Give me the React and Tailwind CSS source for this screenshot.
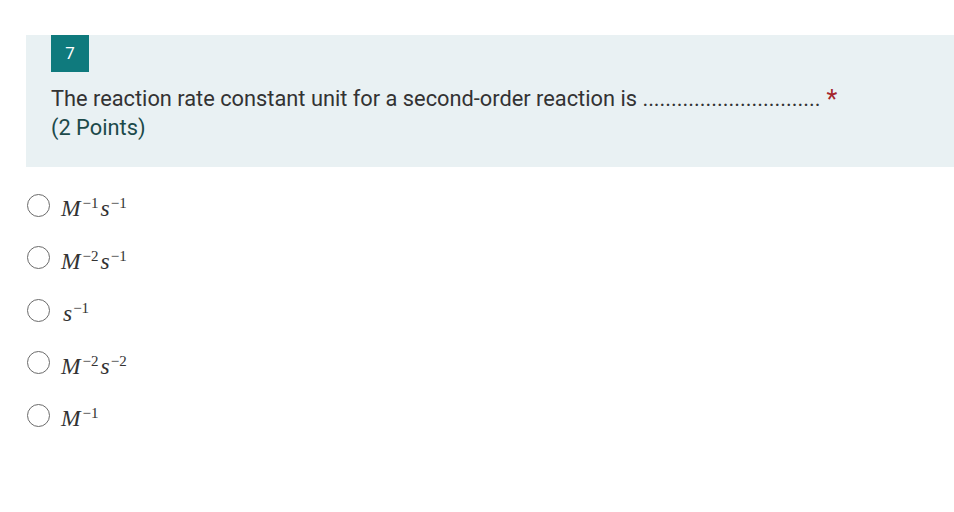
export default function App() {
    const options = [
        { base: "M", e1: "−1", s: "s", e2: "−1" },
        { base: "M", e1: "−2", s: "s", e2: "−1" },
        { base: "", e1: "", s: "s", e2: "−1" },
        { base: "M", e1: "−2", s: "s", e2: "−2" },
        { base: "M", e1: "−1", s: "", e2: "" },
    ];

    return (
        <div className="w-[954px] h-[512px] bg-white overflow-hidden font-['Roboto',sans-serif]">
            <div className="ml-[26px] mt-[35px] h-[132px] bg-[#e9f1f3] pl-[25px]">
                <div className="w-[38px] h-[37px] bg-[#0f7a7d] text-white text-[17px] flex items-center justify-center">
                    7
                </div>
                <div className="mt-[13px] text-[21.8px] leading-[28px] text-[#333]">
                    The reaction rate constant unit for a second-order reaction is ...............................
                    <span className="text-[#a4262c] text-[25px] ml-[6px] align-[-2px]">*</span>
                </div>
                <div className="text-[21.8px] leading-[28px] text-[#1c4a4a]">(2 Points)</div>
            </div>

            <div className="pl-[27px] pt-[26px] flex flex-col gap-[28.5px]">
                {options.map((o, i) => (
                    <div key={i} className="flex items-center h-[24px]">
                        <div className="w-[23px] h-[23px] rounded-full border border-[#6b6b6b] bg-white" />
                        <div className="ml-[11px] font-['Liberation_Serif',serif] italic text-[23.5px] text-[#333] leading-none pt-[7px] whitespace-nowrap">
                            {o.base}
                            {o.e1 && <span className="not-italic text-[15px] align-[8px] ml-[2px]">{o.e1}</span>}
                            {o.s && <span className="ml-[2px]">{o.s}</span>}
                            {o.e2 && <span className="not-italic text-[15px] align-[8px] ml-[1px]">{o.e2}</span>}
                        </div>
                    </div>
                ))}
            </div>
        </div>
    );
}
